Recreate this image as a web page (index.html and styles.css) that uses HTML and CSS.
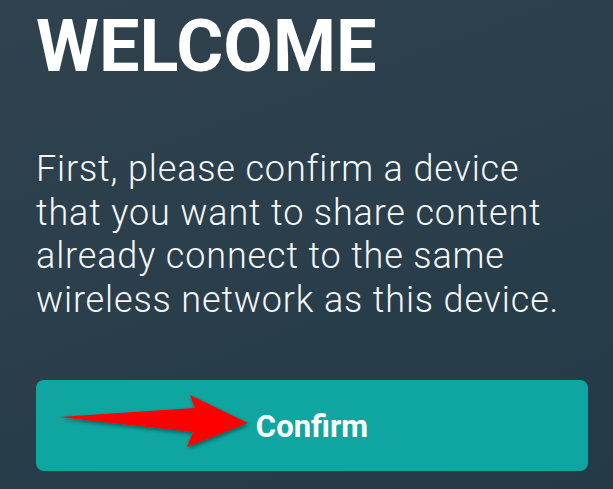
FILE: index.html
```html
<!DOCTYPE html>
<html lang="en">
<head>
<meta charset="utf-8">
<title>Welcome</title>
<link rel="stylesheet" href="styles.css">
</head>
<body>
<main class="screen">
  <h1 class="title">WELCOME</h1>
  <p class="intro">First, please confirm a device<br>that you want to share content<br>already connect to the same<br>wireless network as this device.</p>
  <button class="confirm" type="button">Confirm</button>
</main>
<svg class="arrow" width="613" height="489" viewBox="0 0 613 489" aria-hidden="true">
  <defs>
    <filter id="shadow" x="-20%" y="-50%" width="140%" height="200%">
      <feDropShadow dx="1" dy="2" stdDeviation="2" flood-color="#000" flood-opacity="0.45"/>
    </filter>
  </defs>
  <polygon points="59,417 195,408 190,395 248,423 187,447 193,432" fill="#ff0000" filter="url(#shadow)"/>
</svg>
</body>
</html>
```

FILE: styles.css
```css
html, body {
  margin: 0;
  height: 100%;
}
body {
  background: linear-gradient(160deg, #30424e 0%, #2a3e4b 50%, #233a47 100%);
  font-family: Roboto, "Noto Sans", "Liberation Sans", sans-serif;
  color: #ffffff;
  overflow: hidden;
  position: relative;
}
.screen {
  display: flex;
  flex-direction: column;
  align-items: stretch;
  padding: 10px 25px 0 36px;
}
.title {
  margin: 0;
  font-size: 72px;
  line-height: 73px;
  font-weight: 700;
  letter-spacing: 0;
}
.intro {
  margin: 65px 0 0 0;
  font-family: "Roboto Light", Roboto, "Noto Sans", sans-serif;
  font-size: 36px;
  line-height: 43.7px;
  font-weight: 300;
  letter-spacing: 0.85px;
  color: #f4f6f7;
}
.confirm {
  margin-top: 57px;
  height: 91px;
  border: none;
  border-radius: 8px;
  background: #0fa6a1;
  color: #ffffff;
  font-family: Roboto, "Noto Sans", "Liberation Sans", sans-serif;
  font-size: 31px;
  font-weight: 700;
  padding: 2px 0 0 0;
}
.arrow {
  position: absolute;
  left: 0;
  top: 0;
  pointer-events: none;
}
```
